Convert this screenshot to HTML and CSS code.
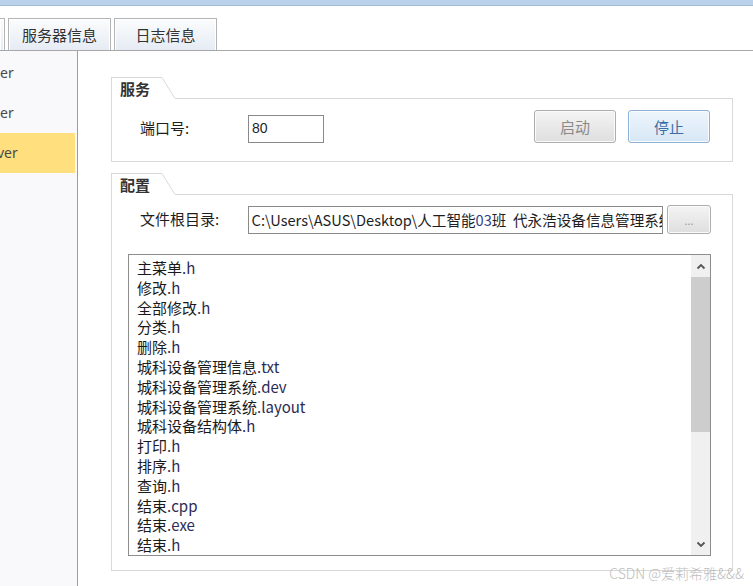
FILE: index.html
```html
<!DOCTYPE html>
<html lang="zh-CN">
<head>
<meta charset="utf-8">
<title>服务器信息</title>
<link rel="stylesheet" href="styles.css">
</head>
<body>
<div class="titlebar"></div>
<div class="tabs">
  <div class="tab stub"></div>
  <div class="tab">服务器信息</div>
  <div class="tab">日志信息</div>
</div>
<div class="page">
  <div class="side">
    <div class="side-item">er</div>
    <div class="side-item">er</div>
    <div class="side-item selected">ver</div>
  </div>
  <div class="content">
    <div class="group g1">
      <div class="group-head">
        <div class="group-label">服务</div>
        <svg class="group-slant" width="13" height="22" viewBox="0 0 13 22"><line x1="0" y1="0.5" x2="13" y2="21.5" stroke="#d9d9d9" stroke-width="1"/></svg>
        <div class="group-line"></div>
      </div>
      <div class="group-body body1">
        <div class="row port-row">
          <div class="label">端口号:</div>
          <div class="field port">80</div>
          <div class="spacer"></div>
          <button class="btn disabled">启动</button>
          <button class="btn primary">停止</button>
        </div>
      </div>
    </div>
    <div class="group g2">
      <div class="group-head">
        <div class="group-label">配置</div>
        <svg class="group-slant" width="13" height="22" viewBox="0 0 13 22"><line x1="0" y1="0.5" x2="13" y2="21.5" stroke="#d9d9d9" stroke-width="1"/></svg>
        <div class="group-line"></div>
      </div>
      <div class="group-body body2">
        <div class="row path-row">
          <div class="label">文件根目录:</div>
          <div class="field path">C:\Users\ASUS\Desktop\人工智能<span class="num">03</span>班&nbsp;&nbsp;代永浩设备信息管理系统</div>
          <button class="btn browse">...</button>
        </div>
        <div class="list">
          <div class="list-items">
            <div class="li">主菜单<span class="ext">.h</span></div>
            <div class="li">修改<span class="ext">.h</span></div>
            <div class="li">全部修改<span class="ext">.h</span></div>
            <div class="li">分类<span class="ext">.h</span></div>
            <div class="li">删除<span class="ext">.h</span></div>
            <div class="li">城科设备管理信息<span class="ext">.txt</span></div>
            <div class="li">城科设备管理系统<span class="ext">.dev</span></div>
            <div class="li">城科设备管理系统<span class="ext">.layout</span></div>
            <div class="li">城科设备结构体<span class="ext">.h</span></div>
            <div class="li">打印<span class="ext">.h</span></div>
            <div class="li">排序<span class="ext">.h</span></div>
            <div class="li">查询<span class="ext">.h</span></div>
            <div class="li">结束<span class="ext">.cpp</span></div>
            <div class="li">结束<span class="ext">.exe</span></div>
            <div class="li">结束<span class="ext">.h</span></div>
          </div>
          <div class="scrollbar">
            <div class="sb-arrow"><svg width="10" height="7" viewBox="0 0 10 7"><path d="M1.5 5.5 L5 2 L8.5 5.5" fill="none" stroke="#555" stroke-width="1.8"/></svg></div>
            <div class="sb-thumb"></div>
            <div class="sb-track"></div>
            <div class="sb-arrow"><svg width="10" height="7" viewBox="0 0 10 7"><path d="M1.5 1.5 L5 5 L8.5 1.5" fill="none" stroke="#555" stroke-width="1.8"/></svg></div>
          </div>
        </div>
      </div>
    </div>
  </div>
</div>
<div class="watermark">CSDN @爱莉希雅&amp;&amp;&amp;</div>
</body>
</html>
```
FILE: styles.css
```css
* { box-sizing: border-box; }
html, body { margin: 0; padding: 0; }
body {
  width: 753px;
  height: 586px;
  overflow: hidden;
  position: relative;
  background: #fff;
  font-family: "Noto Sans CJK SC", "Noto Sans", sans-serif;
  color: #1e1e1e;
}
.titlebar {
  height: 6px;
  background: #b9d1ea;
  border-bottom: 1px solid #a6bad3;
}
.tabs {
  display: flex;
  gap: 3px;
  margin-top: 12px;
  height: 32px;
}
.tab {
  flex: none;
  width: 103px;
  height: 32px;
  border: 1px solid #b4b4b4;
  border-bottom: none;
  background: linear-gradient(#fbfcfd, #e6ecf4);
  box-shadow: inset 1px 1px 0 #fff, inset -1px 0 0 #fff;
  font-size: 15px;
  line-height: 31px;
  text-align: center;
  color: #333;
}
.tab.stub {
  width: 5px;
  border-left: none;
}
.page {
  display: flex;
  border-top: 1px solid #a8a8a8;
  height: 536px;
}
.side {
  flex: none;
  width: 78px;
  background: #f9f9fb;
  border-right: 1px solid #9c9c9c;
  padding-top: 2px;
}
.side-item {
  height: 40px;
  line-height: 40px;
  margin-right: 2px;
  font-family: "Noto Sans", sans-serif;
  font-size: 14px;
  color: #4a4a4a;
  overflow: hidden;
}
.side-item.selected {
  background: #ffdf7e;
  text-indent: -3px;
}
.content {
  flex: none;
  width: 675px;
  padding: 26px 20px 0 33px;
}
.group {
  border-left: 1px solid #d9d9d9;
  border-bottom: 1px solid #d9d9d9;
  display: flex;
  flex-direction: column;
}
.g1 { height: 85px; }
.g2 { height: 398px; margin-top: 11px; }
.group-head {
  display: flex;
  height: 22px;
  flex: none;
}
.group-label {
  width: 50px;
  border-top: 1px solid #d9d9d9;
  padding-left: 8px;
  font-size: 15px;
  font-weight: bold;
  line-height: 21px;
  color: #333;
}
.group-slant { flex: none; display: block; }
.group-line {
  flex: 1;
  border-bottom: 1px solid #d9d9d9;
}
.group-body {
  flex: 1;
  border-right: 1px solid #d9d9d9;
}
.body1 {
  padding: 11px 22px 0 28px;
}
.row {
  display: flex;
  align-items: flex-start;
}
.label {
  width: 108px;
  font-size: 15px;
  line-height: 26px;
  margin-top: 5px;
  color: #1e1e1e;
}
.field {
  border: 1px solid #8a8a8a;
  background: #fff;
  font-size: 14px;
  line-height: 25px;
  padding-left: 3px;
  white-space: nowrap;
  overflow: hidden;
  color: #1e1e1e;
}
.field.port {
  width: 76px;
  height: 28px;
  margin-top: 5px;
  font-family: "Liberation Sans", sans-serif;
}
.spacer { flex: 1; }
.btn {
  flex: none;
  width: 82px;
  height: 33px;
  border: 1px solid #adadad;
  border-radius: 3px;
  font-family: "Noto Sans CJK SC", sans-serif;
  font-size: 15px;
  padding: 0;
  background: linear-gradient(#f4f4f4, #dedede);
  box-shadow: inset 0 0 0 1px #fbfbfb;
  color: #8a8a8a;
}
.btn.primary {
  margin-left: 12px;
  border-color: #8db2d8;
  background: linear-gradient(#eef5fc, #d7e7f6);
  color: #3d6ea5;
}
.body2 {
  padding: 10px 21px 0 16px;
}
.path-row {
  padding-left: 12px;
}
.path-row .label { margin-top: 1px; }
.field.path {
  width: 417px;
  height: 28px;
  margin-top: 1px;
  font-size: 14.6px;
}
.num { color: #2d3f8c; }
.btn.browse {
  width: 44px;
  height: 29px;
  margin-left: 4px;
  font-size: 11px;
  color: #9a9a9a;
  line-height: 20px;
}
.list {
  margin-top: 20px;
  width: 583px;
  height: 302px;
  border: 1px solid #8d8d8d;
  display: flex;
}
.list-items {
  flex: 1;
  overflow: hidden;
  padding: 3px 0 0 8px;
}
.li {
  height: 19.8px;
  line-height: 19.8px;
  font-size: 15px;
  white-space: nowrap;
  color: #1a1a1a;
}
.ext { color: #2b2b55; }
.scrollbar {
  width: 19px;
  background: #f0f0f0;
  display: flex;
  flex-direction: column;
}
.sb-arrow {
  height: 22px;
  display: flex;
  align-items: center;
  justify-content: center;
}
.sb-thumb {
  height: 155px;
  background: #cdcdcd;
}
.sb-track { flex: 1; }
.watermark {
  position: absolute;
  right: 9px;
  top: 563px;
  font-size: 14px;
  color: #bdbdbd;
  font-weight: 300;
  line-height: 20px;
}
```
